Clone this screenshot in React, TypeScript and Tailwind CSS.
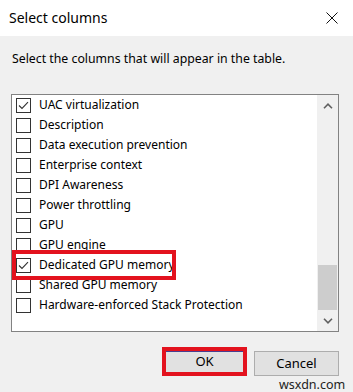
import React from "react";

const items: { label: string; checked: boolean }[] = [
  { label: "UAC virtualization", checked: true },
  { label: "Description", checked: false },
  { label: "Data execution prevention", checked: false },
  { label: "Enterprise context", checked: false },
  { label: "DPI Awareness", checked: false },
  { label: "Power throttling", checked: false },
  { label: "GPU", checked: false },
  { label: "GPU engine", checked: false },
  { label: "Dedicated GPU memory", checked: true },
  { label: "Shared GPU memory", checked: false },
  { label: "Hardware-enforced Stack Protection", checked: false },
];

function Check({ checked }: { checked: boolean }) {
  return (
    <div className="w-[15px] h-[15px] border border-[#333333] bg-white flex items-center justify-center shrink-0">
      {checked && (
        <svg width="11" height="9" viewBox="0 0 11 9">
          <path d="M1 4.5 L4 7.5 L10 1.2" fill="none" stroke="#333" strokeWidth="1.1" />
        </svg>
      )}
    </div>
  );
}

export default function App() {
  return (
    <div
      className="relative w-[353px] h-[392px] overflow-hidden bg-[#f0f0f0] text-[#000]"
      style={{ fontFamily: '"Noto Sans", "Open Sans", sans-serif' }}
    >
      <div className="h-[36px] bg-white flex items-center justify-between pl-[9px] pr-[15px]">
        <span className="text-[14px] leading-none">Select columns</span>
        <svg width="12" height="12" viewBox="0 0 12 12">
          <path d="M0.5 0.5 L11.5 11.5 M11.5 0.5 L0.5 11.5" stroke="#111" strokeWidth="1" />
        </svg>
      </div>
      <div className="pl-[12px] pt-[15px] h-[58px] text-[12.3px] leading-[16px]">
        Select the columns that will appear in the table.
      </div>
      <div className="relative ml-[11px] w-[328px] h-[238px] border border-[#828282] bg-white flex">
        <div className="flex-1 flex flex-col pl-[4px]">
          {items.map((it) => (
            <div key={it.label} className="h-[20px] flex items-center gap-[8px] text-[12px] whitespace-nowrap">
              <Check checked={it.checked} />
              <span>{it.label}</span>
            </div>
          ))}
        </div>
        <div className="w-[21px] bg-[#f0f0f0] flex flex-col">
          <div className="h-[21px] flex items-center justify-center">
            <svg width="10" height="6" viewBox="0 0 10 6">
              <path d="M1 5.2 L5 1.2 L9 5.2" fill="none" stroke="#606060" strokeWidth="1.6" />
            </svg>
          </div>
          <div className="flex-1 flex flex-col justify-end">
            <div className="h-[45px] mx-[1px] bg-[#cdcdcd]" />
          </div>
          <div className="h-[21px] flex items-center justify-center">
            <svg width="10" height="6" viewBox="0 0 10 6">
              <path d="M1 0.8 L5 4.8 L9 0.8" fill="none" stroke="#606060" strokeWidth="1.6" />
            </svg>
          </div>
        </div>
        <div className="absolute left-0 top-[155px] w-[164px] h-[30px] border-[4px] border-[#e3121e]" />
      </div>
      <div className="flex justify-end pr-[14px] mt-[15px] items-start">
        <div className="w-[85px] h-[29px] border-[4px] border-[#e3121e] flex">
          <div className="flex-1 bg-[#e1e1e1] border-t-[1px] border-[#4a3d8f] flex items-center justify-center text-[13px]">
            OK
          </div>
        </div>
        <div className="ml-[7px] mt-[4px] w-[85px] h-[25px] bg-[#e1e1e1] border border-[#adadad] flex items-center justify-center text-[13px]">
          Cancel
        </div>
      </div>
      <div className="absolute left-[279px] top-[378px] text-[12.5px] leading-[14px] text-[#222]">wsxdn.com</div>
    </div>
  );
}
